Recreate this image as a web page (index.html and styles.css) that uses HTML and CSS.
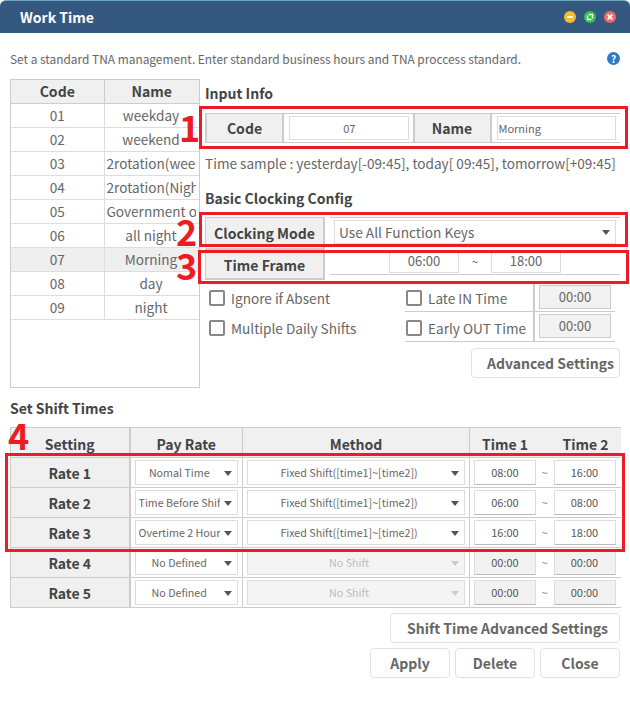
FILE: index.html
```html
<!DOCTYPE html>
<html lang="en">
<head>
    <meta charset="UTF-8">
    <title>Work Time</title>
    <link rel="stylesheet" href="styles.css">
</head>
<body>
    <div class="window">
        <div class="title-bar">
            <span class="title">Work Time</span>
            <div class="win-buttons">
                <svg class="win-btn" viewBox="0 0 13 13"><circle cx="6.5" cy="6.5" r="6.5" fill="#f3bd2e"/><rect x="3.2" y="5.4" width="6.6" height="2.2" rx="1" fill="#fff"/></svg>
                <svg class="win-btn" viewBox="0 0 13 13"><circle cx="6.5" cy="6.5" r="6.5" fill="#33c24a"/><path d="M5 3.8h4.2v4.2M8 9.2H3.8V5" fill="none" stroke="#fff" stroke-width="1.5"/></svg>
                <svg class="win-btn" viewBox="0 0 13 13"><circle cx="6.5" cy="6.5" r="6.5" fill="#ee6a6a"/><path d="M4 4l5 5M9 4l-5 5" stroke="#fff" stroke-width="2"/></svg>
            </div>
        </div>

        <div class="content">
            <div class="intro">
                <span>Set a standard TNA management. Enter standard business hours and TNA proccess standard.</span>
                <span class="help">?</span>
            </div>

            <div class="top">
                <div class="list-box">
                    <table class="code-list">
                        <colgroup><col class="code-col"><col></colgroup>
                        <tr class="list-head"><th>Code</th><th>Name</th></tr>
                        <tr><td>01</td><td><div class="clip">weekday</div></td></tr>
                        <tr><td>02</td><td><div class="clip">weekend</div></td></tr>
                        <tr><td>03</td><td><div class="clip">2rotation(weekday)</div></td></tr>
                        <tr><td>04</td><td><div class="clip">2rotation(Night)</div></td></tr>
                        <tr><td>05</td><td><div class="clip">Government office</div></td></tr>
                        <tr><td>06</td><td><div class="clip">all night</div></td></tr>
                        <tr class="selected"><td>07</td><td><div class="clip">Morning</div></td></tr>
                        <tr><td>08</td><td><div class="clip">day</div></td></tr>
                        <tr><td>09</td><td><div class="clip">night</div></td></tr>
                    </table>
                </div>

                <div class="config">
                    <h2>Input Info</h2>
                    <div class="form-row info-row">
                        <div class="label">Code</div>
                        <div class="field"><div class="box center">07</div></div>
                        <div class="label">Name</div>
                        <div class="field"><div class="box">Morning</div></div>
                    </div>
                    <p class="sample">Time sample : yesterday[-09:45], today[ 09:45], tomorrow[+09:45]</p>

                    <h2 class="basic">Basic Clocking Config</h2>
                    <div class="form-row mode-row">
                        <div class="label">Clocking Mode</div>
                        <div class="field"><div class="box select-big">Use All Function Keys<i class="arrow"></i></div></div>
                    </div>
                    <div class="form-row frame-row">
                        <div class="label">Time Frame</div>
                        <div class="field frame-field">
                            <div class="time-box">06:00</div>
                            <span class="tilde">~</span>
                            <div class="time-box">18:00</div>
                        </div>
                    </div>

                    <div class="options">
                        <div class="opt-col">
                            <label class="opt"><i class="check"></i>Ignore if Absent</label>
                            <label class="opt"><i class="check"></i>Multiple Daily Shifts</label>
                        </div>
                        <div class="opt-col late">
                            <div class="late-row">
                                <label class="opt"><i class="check"></i>Late IN Time</label>
                                <div class="late-val"><div class="grey-box">00:00</div></div>
                            </div>
                            <div class="late-row second">
                                <label class="opt"><i class="check"></i>Early OUT Time</label>
                                <div class="late-val"><div class="grey-box">00:00</div></div>
                            </div>
                        </div>
                    </div>
                    <div class="btn-row adv"><button class="btn">Advanced Settings</button></div>
                </div>
            </div>

            <h2 class="shift-title">Set Shift Times</h2>
            <table class="shift">
                <colgroup><col class="c1"><col class="c2"><col class="c3"><col class="c4"></colgroup>
                <tr class="shift-head">
                    <th>Setting</th><th>Pay Rate</th><th>Method</th>
                    <th><div class="time-head"><span>Time 1</span><span>Time 2</span></div></th>
                </tr>
                <tr>
                    <th>Rate 1</th>
                    <td><div class="sel"><span class="sel-text">Nomal Time</span><i class="arrow"></i></div></td>
                    <td><div class="sel wide"><span class="sel-text">Fixed Shift([time1]~[time2])</span><i class="arrow"></i></div></td>
                    <td><div class="times"><div class="t">08:00</div><span>~</span><div class="t">16:00</div></div></td>
                </tr>
                <tr>
                    <th>Rate 2</th>
                    <td><div class="sel"><span class="sel-text">Time Before Shift</span><i class="arrow"></i></div></td>
                    <td><div class="sel wide"><span class="sel-text">Fixed Shift([time1]~[time2])</span><i class="arrow"></i></div></td>
                    <td><div class="times"><div class="t">06:00</div><span>~</span><div class="t">08:00</div></div></td>
                </tr>
                <tr>
                    <th>Rate 3</th>
                    <td><div class="sel"><span class="sel-text">Overtime 2 Hours</span><i class="arrow"></i></div></td>
                    <td><div class="sel wide"><span class="sel-text">Fixed Shift([time1]~[time2])</span><i class="arrow"></i></div></td>
                    <td><div class="times"><div class="t">16:00</div><span>~</span><div class="t">18:00</div></div></td>
                </tr>
                <tr>
                    <th>Rate 4</th>
                    <td><div class="sel"><span class="sel-text">No Defined</span><i class="arrow"></i></div></td>
                    <td><div class="sel wide off"><span class="sel-text">No Shift</span><i class="arrow"></i></div></td>
                    <td><div class="times"><div class="t off">00:00</div><span>~</span><div class="t off">00:00</div></div></td>
                </tr>
                <tr>
                    <th>Rate 5</th>
                    <td><div class="sel"><span class="sel-text">No Defined</span><i class="arrow"></i></div></td>
                    <td><div class="sel wide off"><span class="sel-text">No Shift</span><i class="arrow"></i></div></td>
                    <td><div class="times"><div class="t off">00:00</div><span>~</span><div class="t off">00:00</div></div></td>
                </tr>
            </table>

            <div class="btn-row shift-adv"><button class="btn btn-shift">Shift Time Advanced Settings</button></div>
            <div class="btn-row actions">
                <button class="btn small">Apply</button>
                <button class="btn small">Delete</button>
                <button class="btn small">Close</button>
            </div>
        </div>

        <!-- red annotations on top of the screenshot -->
        <div class="mark mark1"></div>
        <div class="mark mark2"></div>
        <div class="mark mark3"></div>
        <div class="mark mark4"></div>
        <span class="num num1">1</span>
        <span class="num num2">2</span>
        <span class="num num3">3</span>
        <span class="num num4">4</span>
    </div>
</body>
</html>
```

FILE: styles.css
```css
* {
    box-sizing: border-box;
}

body {
    margin: 0;
    background-color: #fff;
    font-family: "Noto Sans CJK KR", "Noto Sans", sans-serif;
    color: #555;
}

.window {
    position: relative;
    width: 630px;
    height: 717px;
    overflow: hidden;
}

.title-bar {
    height: 33px;
    background-color: #34587f;
    border-top: 1px solid #6fa9c9;
    border-radius: 6px 6px 0 0;
    display: flex;
    justify-content: space-between;
    align-items: center;
    padding: 0 14px 0 20px;
}

.title {
    color: #fff;
    font-size: 14px;
    font-weight: bold;
}

.win-buttons {
    display: flex;
    gap: 8px;
}

.win-btn {
    width: 12px;
    height: 12px;
    display: block;
}

.content {
    padding: 0 10px;
}

.intro {
    height: 46px;
    display: flex;
    justify-content: space-between;
    align-items: center;
    font-size: 11.9px;
    color: #666;
    padding-top: 4px;
}

.help {
    width: 13px;
    height: 13px;
    border-radius: 50%;
    background-color: #2f78c4;
    color: #fff;
    font-size: 10px;
    font-weight: bold;
    line-height: 13px;
    text-align: center;
}

.top {
    display: flex;
    gap: 5px;
}

.list-box {
    width: 190px;
    height: 309px;
    border: 1px solid #ccc;
    flex: none;
}

.code-list {
    width: 188px;
    table-layout: fixed;
    border-collapse: collapse;
}

.code-col {
    width: 93px;
}

.code-list th,
.code-list td {
    height: 24px;
    padding: 0;
    text-align: center;
    font-size: 13.6px;
    border: 1px solid #ddd;
    border-top: 0;
    border-left: 0;
    font-weight: normal;
    color: #666;
}

.code-list .list-head th {
    height: 23px;
    background-color: #f0f0f0;
    border-color: #ccc;
    font-size: 14px;
    font-weight: bold;
    color: #444;
}

.code-list td:last-child,
.code-list th:last-child {
    border-right: 0;
}

.code-list .selected td {
    background-color: #efefef;
}

.clip {
    width: 91px;
    overflow: hidden;
    white-space: nowrap;
    padding-left: 2px;
}

.config {
    width: 415px;
}

h2 {
    margin: 0;
    font-size: 14px;
    font-weight: bold;
    color: #444;
    line-height: 20px;
}

.config > h2:first-child {
    margin-top: 4px;
}

.form-row {
    display: flex;
    border-top: 1px solid #ccc;
    border-bottom: 1px solid #ccc;
    font-size: 13px;
}

.info-row {
    height: 30px;
    margin-top: 10px;
}

.label {
    width: 79px;
    flex: none;
    background-color: #f0f0f0;
    border: 1px solid #ccc;
    border-width: 0 2px;
    display: flex;
    align-items: center;
    justify-content: center;
    font-size: 14px;
    font-weight: bold;
    color: #444;
}

.field {
    flex: 1;
    padding: 2px 4px 2px 5px;
    display: flex;
}

.box {
    flex: 1;
    border: 1px solid #ddd;
    font-size: 11px;
    color: #666;
    display: flex;
    align-items: center;
    padding-left: 1px;
}

.center {
    justify-content: center;
}

.sample {
    margin: 0;
    height: 32px;
    line-height: 40px;
    font-size: 13.6px;
    color: #666;
    white-space: nowrap;
}

.basic {
    margin-top: 13px;
}

.mode-row {
    margin-top: 9px;
    height: 33px;
    border: 0;
}

.mode-row .label,
.frame-row .label {
    width: 120px;
    border: 1px solid #ccc;
    border-width: 1px 2px 2px 1px;
}

.mode-row .field {
    margin-left: 5px;
    border-top: 1px solid #ccc;
    border-bottom: 1px solid #ccc;
    padding: 2px 0 2px 4px;
    height: 30px;
}

.select-big {
    position: relative;
    font-size: 13.7px;
    padding-left: 4px;
    margin-right: 4px;
}

.arrow {
    position: absolute;
    right: 5px;
    top: 50%;
    margin-top: -2px;
    border-left: 4px solid transparent;
    border-right: 4px solid transparent;
    border-top: 5px solid #555;
}

.frame-row {
    height: 30px;
    border: 0;
}

.frame-field {
    margin-left: 5px;
    border-bottom: 1px solid #ccc;
    padding: 0 0 0 59px;
    height: 25px;
    align-items: stretch;
}

.time-box {
    width: 70px;
    height: 23px;
    border: 1px solid #ddd;
    border-top: 0;
    font-size: 13px;
    text-align: center;
    line-height: 22px;
    color: #666;
}

.tilde {
    width: 32px;
    text-align: center;
    font-size: 11px;
    line-height: 22px;
}

.options {
    display: flex;
    font-size: 13.6px;
    color: #666;
    margin-top: 3px;
}

.opt-col {
    width: 200px;
    padding-left: 4px;
}

.opt-col .opt {
    height: 30px;
}

.opt {
    display: flex;
    align-items: center;
    gap: 6px;
    white-space: nowrap;
}

.check {
    width: 16px;
    height: 16px;
    border: 2px solid #888;
    border-radius: 2px;
    background-color: #fff;
    flex: none;
}

.late {
    width: 210px;
    padding: 0;
}

.late-row {
    display: flex;
    height: 29px;
    border-bottom: 1px solid #ccc;
}

.late-row.second {
    height: 30px;
}

.late-row .opt {
    width: 128px;
    height: 100%;
    padding: 2px 0 0 1px;
}

.late-val {
    border-left: 2px solid #ccc;
    padding: 2px 4px;
    flex: 1;
}

.grey-box {
    width: 72px;
    height: 24px;
    background-color: #f2f2f2;
    border: 1px solid #ccc;
    font-size: 13px;
    text-align: center;
    line-height: 22px;
}

.btn-row {
    display: flex;
    justify-content: flex-end;
    gap: 5px;
}

.btn {
    height: 30px;
    background-color: #fff;
    border: 1px solid #e2e2e2;
    border-radius: 4px;
    font-family: inherit;
    font-size: 14px;
    font-weight: bold;
    color: #666;
    padding: 0 5px 0 15px;
}

.btn-shift {
    width: 230px;
    padding: 0 10px 0 15px;
}

.adv {
    margin-top: 5px;
}

.shift-title {
    margin-top: 10px;
}

.shift {
    width: 610px;
    margin-top: 9px;
    table-layout: fixed;
    border-collapse: collapse;
    font-size: 10.7px;
}

.c1 { width: 119px; }
.c2 { width: 113px; }
.c3 { width: 227px; }
.c4 { width: 151px; }

.shift th,
.shift td {
    height: 30px;
    padding: 0;
    border: 1px solid #ccc;
    border-width: 0 1px 1px 0;
    text-align: center;
}

.shift th {
    background-color: #f0f0f0;
    font-size: 14px;
    font-weight: bold;
    color: #444;
}

.shift tr > th:first-child {
    border-left: 1px solid #ccc;
    border-right: 2px solid #ccc;
}

.shift-head th {
    border-top: 1px solid #ccc;
    padding-top: 3px;
}

.shift tr > :last-child {
    border-right: 0;
}

.time-head {
    display: flex;
    justify-content: space-between;
    padding: 0 12px;
}

.sel {
    position: relative;
    height: 25px;
    margin: 0 4px;
    border: 1px solid #ddd;
    line-height: 23px;
    color: #666;
    padding: 0 17px 0 3px;
    white-space: nowrap;
    text-align: center;
}

.sel-text {
    display: block;
    overflow: hidden;
}

.sel.off {
    background-color: #f4f4f4;
    color: #bbb;
}

.sel.off .arrow {
    border-top-color: #ccc;
}

.times {
    display: flex;
    align-items: center;
    justify-content: space-between;
    padding: 0 5px 0 4px;
    color: #888;
}

.t {
    width: 62px;
    height: 25px;
    border: 1px solid #ddd;
    border-bottom-color: #bbb;
    font-size: 11px;
    line-height: 23px;
    color: #555;
}

.t.off {
    background-color: #f2f2f2;
}

.shift-adv {
    margin-top: 5px;
}

.actions {
    margin-top: 5px;
}

.small {
    width: 80px;
    padding: 0;
}

.mark {
    position: absolute;
    border: 3px solid #ed1c24;
    pointer-events: none;
}

.mark1 { left: 199px; top: 106px; width: 429px; height: 43px; }
.mark2 { left: 199px; top: 212px; width: 429px; height: 35px; }
.mark3 { left: 198px; top: 250px; width: 431px; height: 34px; }
.mark4 { left: 5px; top: 453px; width: 620px; height: 99px; }

.num {
    position: absolute;
    color: #ed1c24;
    font-size: 36px;
    font-weight: bold;
    line-height: 36px;
}

.num1 { left: 179px; top: 108px; }
.num2 { left: 176px; top: 212px; }
.num3 { left: 176px; top: 246px; }
.num4 { left: 8px; top: 416px; }
```
